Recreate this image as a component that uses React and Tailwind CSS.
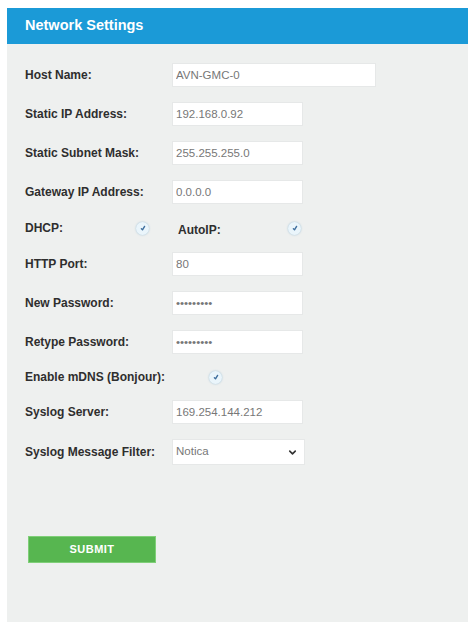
import React from 'react'
import { ChevronDown } from 'lucide-react'

const font = { fontFamily: '"Liberation Sans", Arial, sans-serif' }

const TextField = ({ value, wide, type = 'text' }) => (
    <input
        type={type}
        readOnly
        value={value}
        className={`${wide ? 'w-[204px]' : 'w-[131px]'} h-6 bg-white border border-[#e6e8e8] px-[3px] text-[11.5px] text-[#777] outline-none`}
        style={font}
    />
)

const Check = () => (
    <span className="flex items-center justify-center w-[13px] h-[13px] rounded-full bg-[#eaf5fb] shadow-[0_0_2px_rgba(120,170,200,0.7)]">
        <svg viewBox="0 0 12 12" className="w-3 h-3">
            <path d="M4.4 6.8 L5.5 7.8 L7.6 4.4" fill="none" stroke="#3f6f9e" strokeWidth="1.4" strokeLinecap="round" strokeLinejoin="round" />
        </svg>
    </span>
)

const Label = ({ children, className = '' }) => (
    <span className={`text-[12px] font-bold text-[#2e2e2e] ${className}`}>{children}</span>
)

const Row = ({ label, children }) => (
    <div className="flex items-center h-6">
        <Label className="w-[147px] shrink-0">{label}</Label>
        {children}
    </div>
)

export default function App() {
    return (
        <div className="bg-white w-[471px] h-[623px] pt-2 px-[7px]" style={font}>
            <div className="flex flex-col h-[614px] w-[461px] bg-[#eef0ef]">
                {/* header */}
                <div className="h-9 bg-[#1b9ad7] flex items-center pl-[18px]">
                    <span className="text-white font-bold text-[14.5px]">Network Settings</span>
                </div>

                <div className="flex flex-col gap-[15px] pl-[18px] pt-[19px]">
                    <Row label="Host Name:"><TextField value="AVN-GMC-0" wide /></Row>
                    <Row label="Static IP Address:"><TextField value="192.168.0.92" /></Row>
                    <Row label="Static Subnet Mask:"><TextField value="255.255.255.0" /></Row>
                    <Row label="Gateway IP Address:"><TextField value="0.0.0.0" /></Row>

                    <div className="flex items-center h-[18px]">
                        <Label className="w-[111px] shrink-0">DHCP:</Label>
                        <Check />
                        <Label className="w-[110px] shrink-0 ml-[29px] pt-[3px]">AutoIP:</Label>
                        <Check />
                    </div>

                    <Row label="HTTP Port:"><TextField value="80" /></Row>
                    <Row label="New Password:"><TextField value="password1" type="password" /></Row>
                    <Row label="Retype Password:"><TextField value="password1" type="password" /></Row>

                    <div className="flex items-center h-4">
                        <Label className="w-[184px] shrink-0">Enable mDNS (Bonjour):</Label>
                        <Check />
                    </div>

                    <Row label="Syslog Server:"><TextField value="169.254.144.212" /></Row>

                    <div className="flex items-center h-[26px]">
                        <Label className="w-[147px] shrink-0">Syslog Message Filter:</Label>
                        <div className="w-[133px] h-[26px] bg-white border border-[#e6e8e8] flex items-center justify-between pl-[3px] pr-[6px]">
                            <span className="text-[11.5px] text-[#777]">Notica</span>
                            <ChevronDown size={11} strokeWidth={3.5} className="text-[#333]" />
                        </div>
                    </div>
                </div>

                <div className="pl-[21px] pt-[71px]">
                    <button className="w-[128px] h-[27px] bg-[#57b650] border border-[#7fcf78] text-white font-bold text-[11px] tracking-[0.5px] flex items-center justify-center">
                        SUBMIT
                    </button>
                </div>
            </div>
        </div>
    )
}
